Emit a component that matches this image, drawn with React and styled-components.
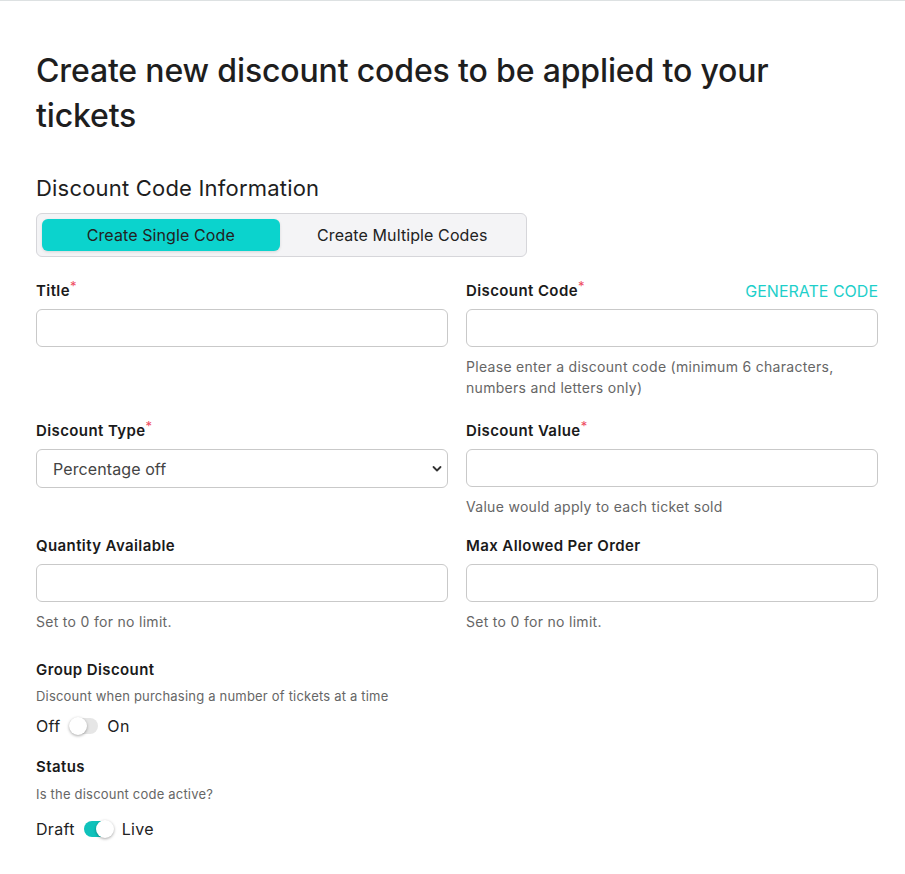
import React, { useState } from "react";
import styled, { createGlobalStyle } from "styled-components";

const GlobalStyle = createGlobalStyle`
	* { box-sizing: border-box; }
	body {
		margin: 0;
		background: #fff;
		font-family: Inter, "Noto Sans", Arial, sans-serif;
		color: #1e1e1e;
	}
`;

const Page = styled.div`
	border-top: 1px solid #dde1e2;
	padding: 47px 27px 40px 36px;
`;

const Heading = styled.h1`
	margin: 0;
	max-width: 800px;
	font-size: 32px;
	line-height: 45px;
	font-weight: 500;
	letter-spacing: -0.15px;
	color: #1e1e1e;
`;

const SectionTitle = styled.h2`
	margin: 35px 0 10px;
	font-size: 22px;
	line-height: 30px;
	font-weight: 400;
	letter-spacing: 0.2px;
	color: #1e1e1e;
`;

const Tabs = styled.div`
	display: flex;
	width: 491px;
	height: 44px;
	padding: 5px;
	gap: 4px;
	background: #f4f4f6;
	border: 1px solid #d6d6da;
	border-radius: 6px;
`;

const Tab = styled.button`
	flex: 1;
	border: 0;
	border-radius: 6px;
	font-family: inherit;
	font-size: 16px;
	letter-spacing: 0.1px;
	color: #222;
	cursor: pointer;
	background: ${p => (p.$active ? "#0bd3cd" : "transparent")};
	box-shadow: ${p => (p.$active ? "0 1px 3px rgba(0,0,0,0.12)" : "none")};
`;

const Grid = styled.div`
	display: grid;
	grid-template-columns: 1fr 1fr;
	column-gap: 18px;
	row-gap: 19px;
	margin-top: 24px;
`;

const Field = styled.div`
	display: flex;
	flex-direction: column;
`;

const LabelRow = styled.div`
	display: flex;
	justify-content: space-between;
	align-items: center;
	height: 20px;
	margin-bottom: 8px;
`;

const Label = styled.label`
	position: relative;
	font-size: 15px;
	line-height: 20px;
	font-weight: 600;
	letter-spacing: 0.4px;
	color: #1a1a1a;
`;

const Required = styled.span`
	position: absolute;
	top: -5px;
	right: -7px;
	font-size: 13px;
	font-weight: 400;
	color: #ee4b5f;
`;

const LinkButton = styled.button`
	border: 0;
	padding: 0;
	background: none;
	font-family: inherit;
	font-size: 16px;
	letter-spacing: 0;
	color: #1ecfca;
	text-transform: uppercase;
	cursor: pointer;
`;

const Input = styled.input`
	height: 38px;
	width: 100%;
	padding: 0 16px;
	border: 1px solid #c9c9c9;
	border-radius: 6px;
	font-family: inherit;
	font-size: 16px;
	outline: none;
`;

const SelectWrap = styled.div`
	position: relative;
`;

const Select = styled.select`
	appearance: none;
	height: 39px;
	width: 100%;
	padding: 0 16px;
	border: 1px solid #c9c9c9;
	border-radius: 6px;
	background: #fff;
	font-family: inherit;
	font-size: 16px;
	letter-spacing: 0.1px;
	color: #444;
	outline: none;
`;

const Chevron = styled.svg`
	position: absolute;
	right: 6px;
	top: 16px;
	pointer-events: none;
`;

const Help = styled.p`
	margin: 9px 0 ${p => p.$mb || 0}px;
	font-size: 14px;
	line-height: 21px;
	letter-spacing: 0.3px;
	color: #666;
`;

const Block = styled.div`
	margin-top: ${p => p.$top}px;
`;

const Desc = styled.p`
	margin: ${p => p.$top}px 0 0;
	font-size: 13px;
	line-height: 20px;
	letter-spacing: 0.2px;
	color: #666;
`;

const SwitchRow = styled.div`
	display: flex;
	align-items: center;
	gap: 9px;
	margin-top: ${p => p.$top}px;
	height: 20px;
	font-size: 16px;
	letter-spacing: 0.3px;
	color: #222;
`;

const Track = styled.button`
	position: relative;
	width: 29px;
	height: 16px;
	padding: 0;
	border: 0;
	border-radius: 8px;
	cursor: pointer;
	background: ${p => (p.$on ? "#0fc2bb" : "#e6e6e6")};
`;

const Knob = styled.span`
	position: absolute;
	top: -1px;
	left: ${p => (p.$on ? "12px" : "0")};
	width: 18px;
	height: 18px;
	border-radius: 50%;
	background: #fff;
	box-shadow: 0 1px 3px rgba(0, 0, 0, 0.35);
`;

const FieldLabel = ({ children, required, extra }) => (
	<LabelRow>
		<Label>
			{children}
			{required && <Required>*</Required>}
		</Label>
		{extra}
	</LabelRow>
);

const Toggle = ({ off, on, value, onChange, top }) => (
	<SwitchRow $top={top}>
		<span>{off}</span>
		<Track $on={value} onClick={() => onChange(!value)}>
			<Knob $on={value} />
		</Track>
		<span>{on}</span>
	</SwitchRow>
);

export default function App() {
	const [mode, setMode] = useState("single");
	const [group, setGroup] = useState(false);
	const [live, setLive] = useState(true);

	return (
		<Page>
			<GlobalStyle />
			<Heading>Create new discount codes to be applied to your tickets</Heading>
			<SectionTitle>Discount Code Information</SectionTitle>
			<Tabs>
				<Tab $active={mode === "single"} onClick={() => setMode("single")}>
					Create Single Code
				</Tab>
				<Tab $active={mode === "multiple"} onClick={() => setMode("multiple")}>
					Create Multiple Codes
				</Tab>
			</Tabs>

			<Grid>
				<Field>
					<FieldLabel required>Title</FieldLabel>
					<Input />
				</Field>
				<Field>
					<FieldLabel required extra={<LinkButton>Generate Code</LinkButton>}>
						Discount Code
					</FieldLabel>
					<Input />
					<Help $mb={4}>
						Please enter a discount code (minimum 6 characters,
						<br />
						numbers and letters only)
					</Help>
				</Field>

				<Field>
					<FieldLabel required>Discount Type</FieldLabel>
					<SelectWrap>
						<Select defaultValue="percentage">
							<option value="percentage">Percentage off</option>
							<option value="fixed">Fixed amount off</option>
						</Select>
						<Chevron width="10" height="8" viewBox="0 0 10 8">
							<path d="M1.5 2l3.5 3.5L8.5 2" fill="none" stroke="#333" strokeWidth="1.8" strokeLinecap="round" strokeLinejoin="round" />
						</Chevron>
					</SelectWrap>
				</Field>
				<Field>
					<FieldLabel required>Discount Value</FieldLabel>
					<Input />
					<Help>Value would apply to each ticket sold</Help>
				</Field>

				<Field>
					<FieldLabel>Quantity Available</FieldLabel>
					<Input />
					<Help>Set to 0 for no limit.</Help>
				</Field>
				<Field>
					<FieldLabel>Max Allowed Per Order</FieldLabel>
					<Input />
					<Help>Set to 0 for no limit.</Help>
				</Field>
			</Grid>

			<Block $top={27}>
				<Label>Group Discount</Label>
				<Desc $top={6}>Discount when purchasing a number of tickets at a time</Desc>
				<Toggle off="Off" on="On" value={group} onChange={setGroup} top={10} />
			</Block>

			<Block $top={20}>
				<Label>Status</Label>
				<Desc $top={7}>Is the discount code active?</Desc>
				<Toggle off="Draft" on="Live" value={live} onChange={setLive} top={15} />
			</Block>
		</Page>
	);
}
